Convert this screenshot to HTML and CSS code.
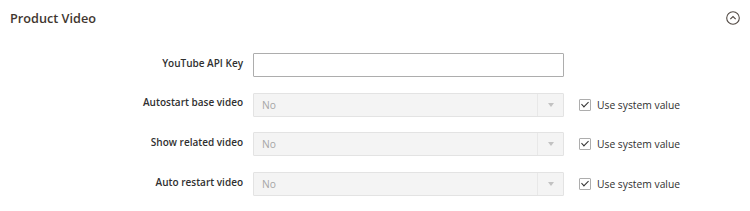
FILE: index.html
```html
<html lang="en">
<head>
    <meta charset="utf-8">
    <title>Product Video</title>
    <link rel="stylesheet" href="styles.css">
</head>
<body>
<div class="section">
    <div class="head">
        <div class="title">Product Video</div>
        <div class="toggle">
            <svg width="14" height="14" viewBox="0 0 14 14">
                <circle cx="7" cy="7" r="6.3" fill="none" stroke="#514943" stroke-width="1.1"/>
                <path d="M4.3 8.2 L7 5.5 L9.7 8.2" fill="none" stroke="#514943" stroke-width="1.1"/>
            </svg>
        </div>
    </div>
    <div class="rows">
        <div class="row">
            <div class="label">YouTube API Key</div>
            <div class="field"><input type="text" class="text"></div>
        </div>
        <div class="row">
            <div class="label">Autostart base video</div>
            <div class="field"><div class="select">No<span class="arrow"></span></div></div>
            <label class="sys"><span class="check"></span>Use system value</label>
        </div>
        <div class="row">
            <div class="label">Show related video</div>
            <div class="field"><div class="select">No<span class="arrow"></span></div></div>
            <label class="sys"><span class="check"></span>Use system value</label>
        </div>
        <div class="row">
            <div class="label">Auto restart video</div>
            <div class="field"><div class="select">No<span class="arrow"></span></div></div>
            <label class="sys"><span class="check"></span>Use system value</label>
        </div>
    </div>
</div>
</body>
</html>
```

FILE: styles.css
```css
*{
    padding: 0;
    margin: 0;
    box-sizing: border-box;
}
body{
    background: #ffffff;
    font-family: "Open Sans", "Liberation Sans", sans-serif;
    color: #303030;
}
.section{
    width: 750px;
}
.head{
    display: flex;
    justify-content: space-between;
    align-items: center;
    height: 35px;
    padding: 0 10px 0 10px;
}
.title{
    font-size: 12.7px;
    font-weight: 600;
    color: #41362f;
}
.toggle{
    width: 14px;
    height: 14px;
}
.toggle svg{
    display: block;
}
.rows{
    display: flex;
    flex-direction: column;
    gap: 15.7px;
    padding-top: 18px;
}
.row{
    display: flex;
    align-items: center;
    height: 24px;
}
.label{
    width: 243px;
    text-align: right;
    font-size: 10px;
    font-weight: 600;
    color: #303030;
    padding-bottom: 5px;
}
.field{
    margin-left: 10px;
    width: 311px;
}
.text{
    display: block;
    width: 100%;
    height: 24px;
    border: 1px solid #adadad;
    border-radius: 1px;
    background: #ffffff;
}
.select{
    position: relative;
    height: 24px;
    border: 1px solid #e3e3e3;
    border-radius: 1px;
    background: #f4f4f4;
    color: #a6a6a6;
    font-size: 10.3px;
    line-height: 22px;
    padding-left: 8px;
}
.arrow{
    position: absolute;
    right: 0;
    top: 0;
    width: 26px;
    height: 22px;
    border-left: 1px solid #e8e8e8;
}
.arrow:after{
    content: "";
    position: absolute;
    left: 10px;
    top: 9px;
    border-left: 3px solid transparent;
    border-right: 3px solid transparent;
    border-top: 4px solid #c2c2c2;
}
.sys{
    display: flex;
    align-items: center;
    margin-left: 15px;
    font-size: 10.3px;
    color: #303030;
}
.check{
    position: relative;
    width: 12px;
    height: 12px;
    border: 1px solid #adadad;
    border-radius: 1px;
    margin-right: 6px;
    background: #ffffff;
}
.check:after{
    content: "";
    position: absolute;
    left: 3px;
    top: 0px;
    width: 3px;
    height: 6px;
    border-right: 1.5px solid #303030;
    border-bottom: 1.5px solid #303030;
    transform: rotate(45deg);
}
```
